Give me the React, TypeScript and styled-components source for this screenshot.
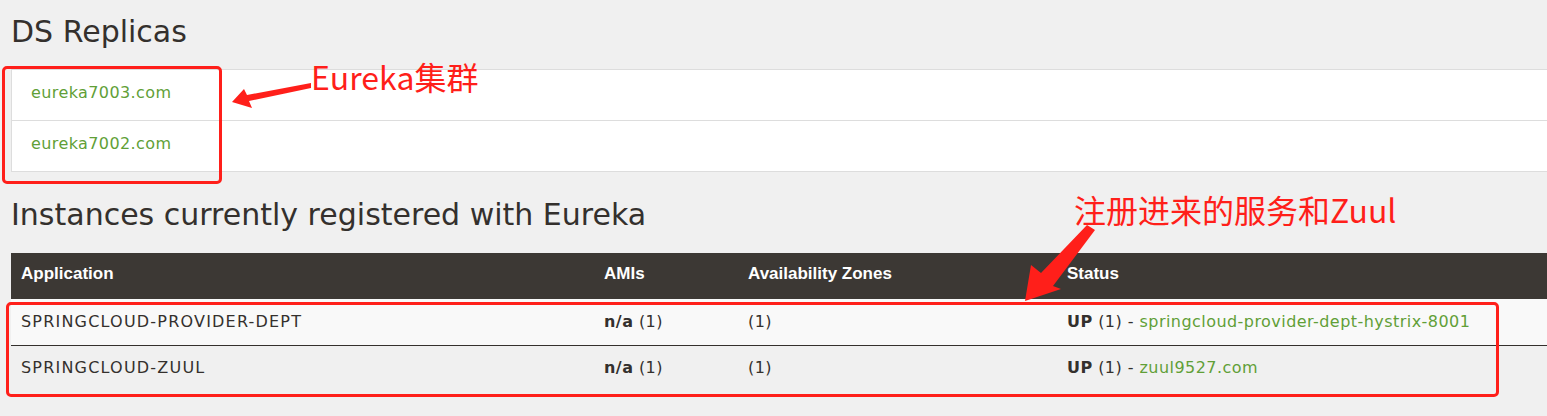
import React from 'react';
import styled, { createGlobalStyle } from 'styled-components';

const Global = createGlobalStyle`
  html, body { margin: 0; padding: 0; background: #f0f0f0; overflow: hidden; }
  body { font-family: "DejaVu Sans", "Noto Sans CJK SC", sans-serif; color: #34302d; }
`;

const Page = styled.div`
  position: relative;
  width: 1600px;
  box-sizing: border-box;
  padding: 14px 0 30px 11px;
`;

const Heading = styled.h1`
  margin: 0;
  font-family: "DejaVu Sans", sans-serif;
  font-weight: normal;
  font-size: 30px;
  line-height: 36px;
  color: #34302d;
`;

const ReplicaList = styled.ul`
  list-style: none;
  margin: 19px 0 25px;
  padding: 0;
  background: #fff;
  border: 1px solid #ddd;
`;

const ReplicaItem = styled.li`
  line-height: 46px;
  padding: 0 0 4px 19px;
  font-size: 16px;
  letter-spacing: 0.4px;
  & + & { border-top: 1px solid #ddd; }
`;

const Link = styled.a`
  color: #619f37;
  text-decoration: none;
`;

const Table = styled.table`
  width: 100%;
  margin-top: 20px;
  border-collapse: collapse;
  table-layout: fixed;
`;

const HeadCell = styled.th<{ $w?: number }>`
  ${p => (p.$w ? `width: ${p.$w}px;` : '')}
  background: #3c3834;
  color: #fff;
  text-align: left;
  font-family: "Liberation Sans", Arial, sans-serif;
  font-weight: bold;
  font-size: 17px;
  line-height: 42px;
  padding: 0 0 4px 10px;
`;

const Row = styled.tr<{ $striped?: boolean }>`
  background: ${p => (p.$striped ? '#f9f9f9' : '#f0f0f0')};
  border-top: ${p => (p.$striped ? '1px solid #fafafa' : 'none')};
  border-bottom: ${p => (p.$striped ? '1px solid #34302d' : 'none')};
`;

const Cell = styled.td<{ $caps?: boolean }>`
  font-size: 16px;
  letter-spacing: ${p => (p.$caps ? '1.2px' : '0.45px')};
  line-height: 43px;
  padding: 0 0 2px 10px;
  color: #34302d;
  white-space: nowrap;
`;

const Strong = styled.b`
  font-weight: 600;
`;

const Overlay = styled.div`
  position: absolute;
  inset: 0;
  pointer-events: none;
`;

const RedBox = styled.div<{ $l: number; $t: number; $w: number; $h: number }>`
  position: absolute;
  left: ${p => p.$l}px;
  top: ${p => p.$t}px;
  width: ${p => p.$w}px;
  height: ${p => p.$h}px;
  box-sizing: border-box;
  border: 3px solid #ff1f1a;
  border-radius: 5px;
`;

const Note = styled.div<{ $l: number; $t: number }>`
  position: absolute;
  left: ${p => p.$l}px;
  top: ${p => p.$t}px;
  font-family: "Noto Sans CJK SC", sans-serif;
  font-size: 32px;
  line-height: 1;
  color: #ff1f1a;
  white-space: nowrap;
`;

const Arrows = styled.svg`
  position: absolute;
  left: 0;
  top: 0;
`;

const replicas = ['eureka7003.com', 'eureka7002.com'];

const apps = [
  { name: 'SPRINGCLOUD-PROVIDER-DEPT', link: 'springcloud-provider-dept-hystrix-8001' },
  { name: 'SPRINGCLOUD-ZUUL', link: 'zuul9527.com' },
];

export default function App() {
  return (
    <>
      <Global />
      <Page>
        <Heading>DS Replicas</Heading>
        <ReplicaList>
          {replicas.map(r => (
            <ReplicaItem key={r}>
              <Link href="#">{r}</Link>
            </ReplicaItem>
          ))}
        </ReplicaList>
        <Heading>Instances currently registered with Eureka</Heading>
        <Table>
          <thead>
            <tr>
              <HeadCell $w={573}>Application</HeadCell>
              <HeadCell $w={134}>AMIs</HeadCell>
              <HeadCell $w={309}>Availability Zones</HeadCell>
              <HeadCell>Status</HeadCell>
            </tr>
          </thead>
          <tbody>
            {apps.map((a, i) => (
              <Row key={a.name} $striped={i === 0}>
                <Cell $caps>{a.name}</Cell>
                <Cell>
                  <Strong>n/a</Strong> (1)
                </Cell>
                <Cell>(1)</Cell>
                <Cell>
                  <Strong>UP</Strong> (1) - <Link href="#">{a.link}</Link>
                </Cell>
              </Row>
            ))}
          </tbody>
        </Table>
        <Overlay>
          <RedBox $l={2} $t={66} $w={220} $h={118} />
          <RedBox $l={6} $t={302} $w={1493} $h={95} />
          <Note $l={311} $t={60}>Eureka集群</Note>
          <Note $l={1074} $t={193}>注册进来的服务和Zuul</Note>
          <Arrows width="1547" height="416" viewBox="0 0 1547 416">
            <polygon
              fill="#ff1f1a"
              points="311,83 247,95 244,89 232,102 252,108 249,101 311,88"
            />
            <polygon
              fill="#ff1f1a"
              points="1087,225 1095,230 1053,286 1061,289 1025,301 1031,265 1041,273"
            />
          </Arrows>
        </Overlay>
      </Page>
    </>
  );
}
